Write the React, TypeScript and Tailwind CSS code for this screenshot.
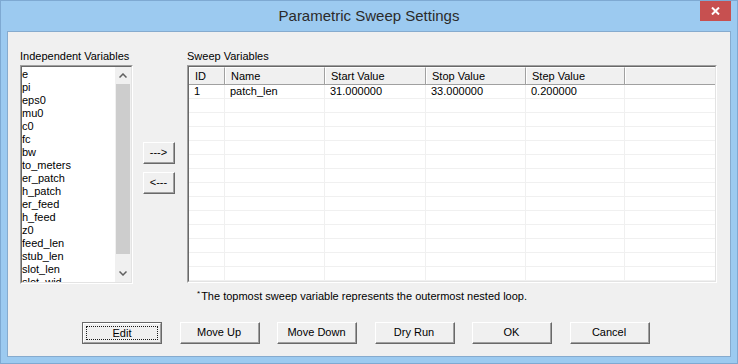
import React from 'react';

const variables = [
  'e', 'pi', 'eps0', 'mu0', 'c0', 'fc', 'bw', 'to_meters', 'er_patch', 'h_patch',
  'er_feed', 'h_feed', 'z0', 'feed_len', 'stub_len', 'slot_len', 'slot_wid',
];

const columns = [
  { key: 'id', label: 'ID', width: 36 },
  { key: 'name', label: 'Name', width: 100 },
  { key: 'start', label: 'Start Value', width: 101 },
  { key: 'stop', label: 'Stop Value', width: 100 },
  { key: 'step', label: 'Step Value', width: 99 },
];

const sweepRows: Record<string, string>[] = [
  { id: '1', name: 'patch_len', start: '31.000000', stop: '33.000000', step: '0.200000' },
];

const ROW_COUNT = 14;

function Chevron({ up }: { up?: boolean }) {
  return (
    <svg width="8" height="5" viewBox="0 0 8 5">
      <path d={up ? 'M0.5 4.5 L4 1 L7.5 4.5' : 'M0.5 0.5 L4 4 L7.5 0.5'} fill="none" stroke="#606060" strokeWidth="1.5" />
    </svg>
  );
}

// classic raised 3d push button
function PushButton({ label, isDefault, className = '' }: { label: string; isDefault?: boolean; className?: string }) {
  if (isDefault) {
    return (
      <div className={`h-[22px] border border-[#696969] bg-[#f0f0f0] ${className}`}>
        <div className="h-full border-t border-l border-t-white border-l-white border-b border-r border-b-[#a0a0a0] border-r-[#a0a0a0] p-[2px]">
          <div className="h-full border border-dotted border-[#1a1a1a] flex items-center justify-center text-[11px] leading-[13px] text-black">
            {label}
          </div>
        </div>
      </div>
    );
  }
  return (
    <div className={`h-[22px] bg-[#f0f0f0] border-t border-l border-t-white border-l-white border-b border-r border-b-[#696969] border-r-[#696969] ${className}`}>
      <div className="h-full border-b border-r border-b-[#a0a0a0] border-r-[#a0a0a0] flex items-center justify-center text-[11px] leading-[13px] text-black">
        {label}
      </div>
    </div>
  );
}

function VariableList() {
  return (
    <div className="h-[219px] w-[113px] border border-t-[#a0a0a0] border-l-[#a0a0a0] border-b-white border-r-white">
      <div className="h-full flex bg-white border border-t-[#696969] border-l-[#696969] border-b-[#e3e3e3] border-r-[#e3e3e3]">
        <div className="flex-1 overflow-hidden pt-[1px]">
          {variables.map(v => (
            <div key={v} className="h-[13px] leading-[13px] text-[11px] text-black whitespace-nowrap">{v}</div>
          ))}
        </div>
        <div className="w-[16px] flex flex-col bg-[#f0f0f0]">
          <div className="h-[17px] flex items-center justify-center"><Chevron up /></div>
          <div className="h-[170px] bg-[#cdcdcd] mx-[1px]" />
          <div className="flex-1" />
          <div className="h-[17px] flex items-center justify-center"><Chevron /></div>
        </div>
      </div>
    </div>
  );
}

function SweepTable() {
  return (
    <div className="h-[218px] w-[530px] border border-t-[#a0a0a0] border-l-[#a0a0a0] border-b-white border-r-white">
      <div className="h-full flex flex-col bg-white border border-t-[#696969] border-l-[#696969] border-b-[#e3e3e3] border-r-[#e3e3e3] overflow-hidden">
        {/* Header */}
        <div className="flex h-[18px] bg-[#f0f0f0] border-b border-[#a0a0a0] shrink-0">
          {columns.map(c => (
            <div
              key={c.key}
              className="h-full pl-[5px] flex items-center text-[11px] leading-[13px] text-black border-r border-[#a0a0a0] border-t border-l border-t-white border-l-white"
              style={{ width: c.width }}
            >
              {c.label}
            </div>
          ))}
          <div className="flex-1 border-t border-l border-t-white border-l-white" />
        </div>
        {/* Rows */}
        {Array.from({ length: ROW_COUNT }).map((_, i) => {
          const row = sweepRows[i];
          return (
            <div key={i} className="flex h-[14px] shrink-0 border-b border-[#f0f0f0]">
              {columns.map(c => (
                <div
                  key={c.key}
                  className="h-full pl-[5px] flex items-center text-[11px] leading-[13px] text-black border-r border-[#f0f0f0] whitespace-nowrap"
                  style={{ width: c.width }}
                >
                  {row ? row[c.key] : ''}
                </div>
              ))}
              <div className="flex-1" />
            </div>
          );
        })}
      </div>
    </div>
  );
}

export default function App() {
  return (
    <div
      className="w-[738px] h-[364px] bg-[#9ccaf0] border border-[#7ea9d2] flex flex-col text-black"
      style={{ fontFamily: '"Liberation Sans", Arial, sans-serif' }}
    >
      {/* Title bar */}
      <div className="relative h-[30px] shrink-0 flex items-center justify-center">
        <span className="text-[15px] text-[#2b2b2b]">Parametric Sweep Settings</span>
        <div className="absolute top-0 right-[6px] w-[31px] h-[20px] bg-[#c75050] flex items-center justify-center">
          <svg width="9" height="8" viewBox="0 0 9 8">
            <path d="M1 0.5 L8 7.5 M8 0.5 L1 7.5" stroke="white" strokeWidth="2" />
          </svg>
        </div>
      </div>

      {/* Client area */}
      <div className="mx-[6px] h-[326px] shrink-0 bg-[#f0f0f0] border border-[#86abce] flex flex-col">
        <div className="flex pl-[12px] pt-[18px]">
          <div className="w-[113px] flex flex-col">
            <div className="h-[13px] leading-[13px] text-[11px] whitespace-nowrap">Independent Variables</div>
            <div className="mt-[2px]"><VariableList /></div>
          </div>
          <div className="ml-[10px] w-[32px] pt-[92px] flex flex-col gap-[8px]">
            <PushButton label="--->" />
            <PushButton label="<---" />
          </div>
          <div className="ml-[12px] flex flex-col">
            <div className="h-[13px] leading-[13px] text-[11px]">Sweep Variables</div>
            <div className="mt-[2px]"><SweepTable /></div>
          </div>
        </div>

        <div className="pl-[189px] mt-[6px] h-[13px] leading-[13px] text-[11px] whitespace-nowrap">
          <sup className="text-[8px] mr-[1px]">*</sup>The topmost sweep variable represents the outermost nested loop.
        </div>

        <div className="flex pl-[74px] mt-[19px] gap-[17.5px]">
          <PushButton label="Edit" isDefault className="w-[80px]" />
          <PushButton label="Move Up" className="w-[80px]" />
          <PushButton label="Move Down" className="w-[80px]" />
          <PushButton label="Dry Run" className="w-[80px]" />
          <PushButton label="OK" className="w-[80px]" />
          <PushButton label="Cancel" className="w-[80px]" />
        </div>
      </div>
    </div>
  );
}
